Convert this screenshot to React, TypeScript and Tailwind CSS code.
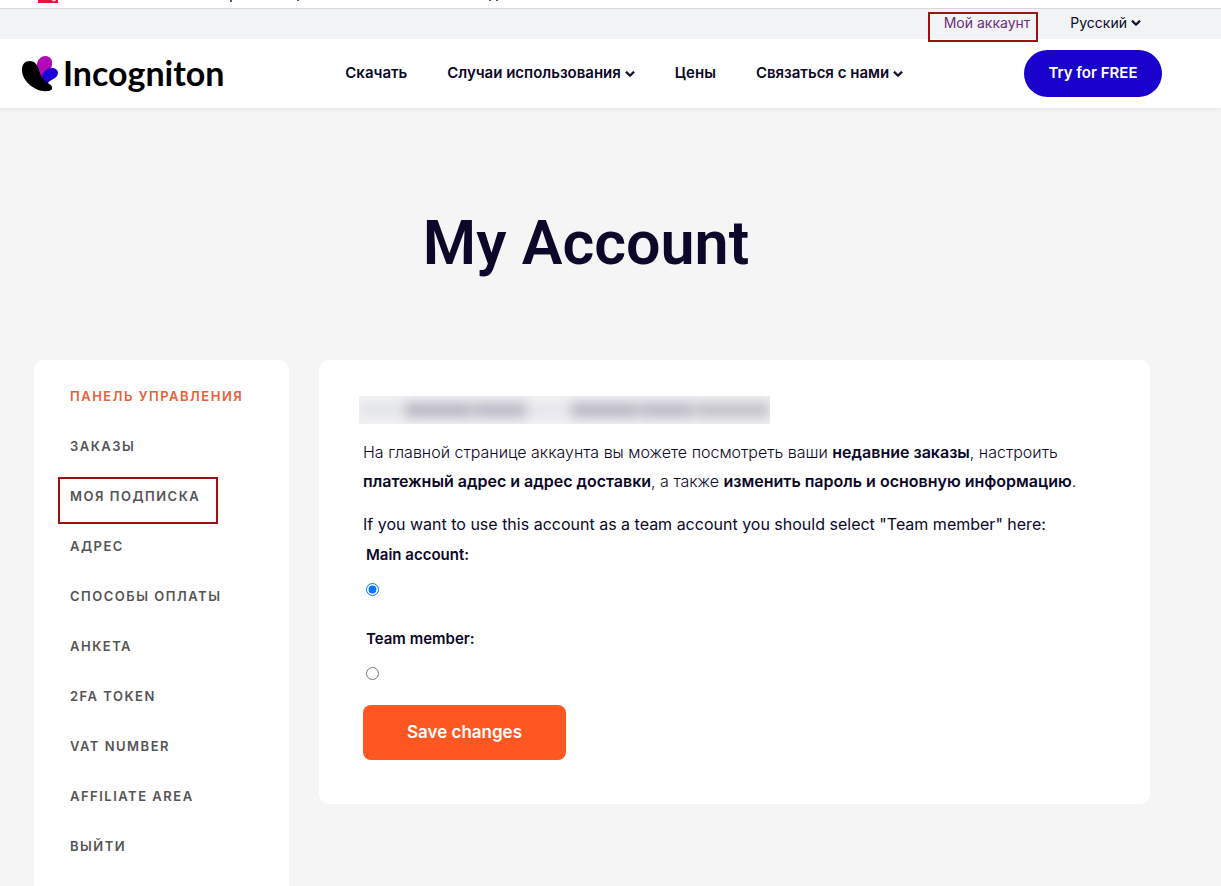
import { useState } from 'react';
import { FaChevronDown } from 'react-icons/fa';

const NAV_ITEMS = [
  { label: 'Скачать', menu: false },
  { label: 'Случаи использования', menu: true },
  { label: 'Цены', menu: false },
  { label: 'Связаться с нами', menu: true },
];

const ACCOUNT_LINKS = [
  'Панель управления',
  'Заказы',
  'Моя подписка',
  'Адрес',
  'Способы оплаты',
  'Анкета',
  '2FA token',
  'VAT number',
  'Affiliate area',
  'Выйти',
];

function Chevron() {
  return <FaChevronDown size={10} stroke="currentColor" strokeWidth={40} />;
}

function Logo() {
  return (
    <a href="#" className="flex items-center gap-1" aria-label="Incogniton">
      <svg width="37" height="36" viewBox="0 0 37 36" aria-hidden="true">
        <path
          d="M15 12C14 5 18 0 23.500 0C29 0 31.500 5 29.500 11L27 19L20 24Z"
          fill="#b10bb8"
        />
        <path
          d="M19 23C20 16 25 12 30 12C35 12 37.500 16 35 20C33 23 28 24 26 27L22 31Z"
          fill="#1d00d6"
        />
        <path
          d="M0 14C0 8 3 5 8 5C13 5 15.500 9 17 14C18.500 20 21 24 25 26.500C28.500 28.500 31 30 30 33C28.500 36 20 36 14 33C6 29 0 22 0 14Z"
          fill="#000"
        />
      </svg>
      <span className="pb-0.5 font-['Lato',sans-serif] text-[34px] leading-9 font-bold text-black">
        Incogniton
      </span>
    </a>
  );
}

function TopBar() {
  return (
    <div className="flex h-[30px] items-center justify-end gap-10 bg-[#f2f3f5] pr-20 pb-0.5 text-sm">
      <a href="#" className="relative text-[#6b2f7c]">
        Мой аккаунт
        <span className="absolute -top-px -right-2 -bottom-[9px] -left-4 z-10 border-2 border-[#9a1212]" />
      </a>
      <button type="button" className="flex items-center gap-1">
        Русский
        <Chevron />
      </button>
    </div>
  );
}

function Header() {
  return (
    <header className="flex h-[69px] items-center justify-between bg-white pr-[59px] pl-[22px] shadow-[0_3px_3px_rgba(0,0,0,0.04)]">
      <Logo />
      <nav className="flex items-center gap-10 text-[15px] font-semibold">
        {NAV_ITEMS.map((item) => (
          <a key={item.label} href="#" className="flex items-center gap-1">
            {item.label}
            {item.menu && <Chevron />}
          </a>
        ))}
      </nav>
      <a
        href="#"
        className="flex h-[47px] w-[138px] items-center justify-center rounded-full bg-[#1a00cc] text-[15px] font-semibold text-white"
      >
        Try for FREE
      </a>
    </header>
  );
}

function Sidebar() {
  return (
    <nav className="w-[255px] shrink-0 rounded-t-[10px] bg-white pt-[11px] pl-9">
      <ul>
        {ACCOUNT_LINKS.map((label, i) => (
          <li key={label} className="flex h-[50px] items-center">
            <a
              href="#"
              className={`relative text-[13px] leading-5 font-semibold tracking-[1.5px] uppercase ${
                i === 0 ? 'text-[#e8613a]' : 'text-[#555]'
              }`}
            >
              {label}
              {label === 'Моя подписка' && (
                <span className="absolute -top-[9px] -right-[18px] -bottom-[18px] -left-3 border-2 border-[#9a1212]" />
              )}
            </a>
          </li>
        ))}
      </ul>
    </nav>
  );
}

function RedactedLine() {
  return (
    <div className="-ml-1 flex h-7 w-[411px] items-center overflow-hidden bg-[#f2f2f4]">
      <div className="flex w-full items-center gap-0.5 blur-[6px]">
        <span className="h-3 w-11 bg-[#e0e2e6]" />
        <span className="h-4 w-[66px] bg-[#b9b8c4]" />
        <span className="h-4 w-[54px] bg-[#bcbbc7]" />
        <span className="h-3 w-10 bg-[#e4e4ea]" />
        <span className="h-4 w-[66px] bg-[#b9b8c4]" />
        <span className="h-4 w-[54px] bg-[#bcbbc7]" />
        <span className="h-4 flex-1 bg-[#c2c2ca]" />
      </div>
    </div>
  );
}

function AccountPanel() {
  const [type, setType] = useState('main');
  return (
    <section className="flex flex-1 flex-col gap-3.5 self-start rounded-[10px] bg-white px-11 pt-9 pb-11 text-base leading-[29px]">
      <RedactedLine />
      <p className="font-light">
        На главной странице аккаунта вы можете посмотреть ваши{' '}
        <a href="#" className="font-semibold">недавние заказы</a>, настроить{' '}
        <a href="#" className="font-semibold">платежный адрес и адрес доставки</a>, а также{' '}
        <a href="#" className="font-semibold">изменить пароль и основную информацию</a>.
      </p>
      <form onSubmit={(e) => e.preventDefault()}>
        <p>If you want to use this account as a team account you should select "Team member" here:</p>
        <div className="flex flex-col gap-[31px] pt-1 pl-[3px] text-[15px] leading-6 font-semibold">
          <div className="flex flex-col items-start gap-4">
            <label htmlFor="main-account">Main account:</label>
            <input
              id="main-account"
              type="radio"
              name="account-type"
              className="size-[13px]"
              checked={type === 'main'}
              onChange={() => setType('main')}
            />
          </div>
          <div className="flex flex-col items-start gap-4">
            <label htmlFor="team-member">Team member:</label>
            <input
              id="team-member"
              type="radio"
              name="account-type"
              className="size-[13px]"
              checked={type === 'team'}
              onChange={() => setType('team')}
            />
          </div>
        </div>
        <button
          type="submit"
          className="mt-[25px] block h-[55px] w-[203px] rounded-lg bg-[#ff5722] text-[17px] font-semibold text-white"
        >
          Save changes
        </button>
      </form>
    </section>
  );
}

export default function App() {
  return (
    <div className="flex min-h-screen flex-col bg-[#f5f5f5] font-['Inter',sans-serif] text-[#0b0829]">
      {/* Bottom edge of the browser's bookmarks bar */}
      <div className="h-[9px] border-b border-[#d5d6d8] bg-white">
        <svg width="520" height="4" className="block" aria-hidden="true">
          <path d="M38 0H58V3H38Z" fill="#e4143c" />
          <path d="M52 0Q54 2 56 0" stroke="#fff" fill="none" />
          <path d="M231 0V2M298 0V1M490 0V1M497 0V1" stroke="#222" strokeWidth="1.500" />
        </svg>
      </div>
      <TopBar />
      <Header />
      <main className="flex flex-1 flex-col pr-[71px] pl-[34px]">
        <h1 className="pt-[99px] pr-3 pb-[81px] text-center font-['Roboto',sans-serif] text-[61px] leading-[72px] font-semibold">
          My Account
        </h1>
        <div className="flex flex-1 gap-[30px]">
          <Sidebar />
          <AccountPanel />
        </div>
      </main>
    </div>
  );
}
